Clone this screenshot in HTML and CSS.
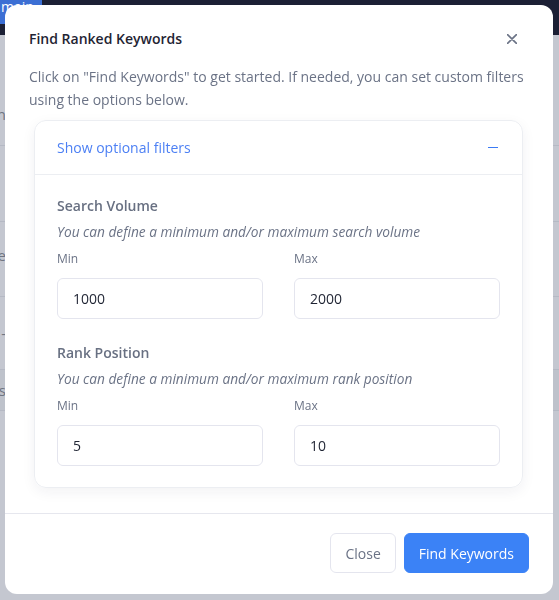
FILE: index.html
```html
<!DOCTYPE html>
<html lang="en">
<head>
<meta charset="utf-8">
<title>Find Ranked Keywords</title>
<link rel="stylesheet" href="styles.css">
</head>
<body>
<div class="page">
  <div class="topbar"><span class="tab">main</span></div>
  <div class="rows">
    <div class="row r1"><span class="cell">Domain</span></div>
    <div class="row r2"><span class="cell"></span></div>
    <div class="row r3"><span class="cell">Keyword ne</span></div>
    <div class="row r4"><span class="cell">-</span></div>
    <div class="row r5"><span class="cell">Results</span></div>
    <div class="row r6"><span class="cell"></span></div>
  </div>
</div>

<div class="modal">
  <div class="modal-header">
    <h2 class="modal-title">Find Ranked Keywords</h2>
    <button class="close-x" aria-label="Close">
      <svg width="10" height="10" viewBox="0 0 10 10"><path d="M0.5 0.5L9.5 9.5M9.5 0.5L0.5 9.5" stroke="currentColor" stroke-width="1.6" stroke-linecap="round"/></svg>
    </button>
  </div>
  <div class="modal-body">
    <p class="intro">Click on "Find Keywords" to get started. If needed, you can set custom filters using the options below.</p>
    <div class="card">
      <div class="card-head">
        <span class="toggle-text">Show optional filters</span>
        <span class="minus"></span>
      </div>
      <div class="card-body">
        <div class="group">
          <h3 class="group-title">Search Volume</h3>
          <p class="group-desc">You can define a minimum and/or maximum search volume</p>
          <div class="fields">
            <label class="field"><span class="field-label">Min</span><span class="input">1000</span></label>
            <label class="field"><span class="field-label">Max</span><span class="input">2000</span></label>
          </div>
        </div>
        <div class="group second">
          <h3 class="group-title">Rank Position</h3>
          <p class="group-desc">You can define a minimum and/or maximum rank position</p>
          <div class="fields">
            <label class="field"><span class="field-label">Min</span><span class="input">5</span></label>
            <label class="field"><span class="field-label">Max</span><span class="input">10</span></label>
          </div>
        </div>
      </div>
    </div>
  </div>
  <div class="modal-footer">
    <button class="btn btn-light">Close</button>
    <button class="btn btn-primary">Find Keywords</button>
  </div>
</div>
</body>
</html>
```
FILE: styles.css
```css
* { box-sizing: border-box; }
html, body { margin: 0; padding: 0; }
body {
  font-family: "Open Sans", "Noto Sans", sans-serif;
  background: #c4c7d0;
  width: 559px;
  height: 600px;
  overflow: hidden;
}
.page { width: 559px; height: 600px; }
.topbar {
  height: 35px;
  background: #1c2035;
  display: flex;
  align-items: flex-start;
}
.tab {
  width: 42px;
  height: 24px;
  background: #3c6fd4;
  color: #fff;
  font-size: 14px;
  line-height: 14px;
  white-space: nowrap;
  overflow: hidden;
  padding-left: 1px;
}
.rows { display: flex; flex-direction: column; }
.row {
  border-bottom: 1px solid #b5b9c4;
  display: flex;
  align-items: center;
}
.r1 { height: 111px; align-items: flex-end; padding-bottom: 22px; }
.r2 { height: 76px; }
.r3 { height: 75px; align-items: flex-start; padding-top: 24px; }
.r4 { height: 73px; }
.r5 { height: 41px; background: #bec2cb; }
.r6 { border-bottom: none; }
.cell {
  width: 6px;
  overflow: hidden;
  direction: rtl;
  white-space: nowrap;
  color: #6f7582;
  font-size: 15px;
  line-height: 18px;
}

/* modal */
.modal {
  position: fixed;
  top: 5px;
  left: 5px;
  width: 548px;
  height: 589px;
  background: #fff;
  border-radius: 12px;
  display: flex;
  flex-direction: column;
}
.modal-header {
  padding: 24px 24px 0 24px;
  display: flex;
  align-items: center;
  justify-content: space-between;
  height: 43px;
}
.modal-title {
  margin: 0;
  font-size: 14px;
  font-weight: 600;
  line-height: 19px;
  color: #1f2433;
}
.close-x {
  width: 34px;
  height: 34px;
  margin: -7px 0;
  border: none;
  background: none;
  padding: 0;
  color: #6b7386;
  display: flex;
  align-items: center;
  justify-content: center;
}
.modal-body {
  padding: 17px 24px 25px 24px;
  border-bottom: 1px solid #e6e7ee;
}
.intro {
  margin: 0 0 9px 0;
  font-size: 14px;
  line-height: 23px;
  color: #6b7386;
}
.card {
  margin: 0 6px 0 5px;
  border: 1px solid #eceef2;
  border-radius: 12px;
  box-shadow: 0 4px 14px rgba(30, 40, 60, 0.06);
}
.card-head {
  height: 54px;
  padding: 0 22px;
  display: flex;
  align-items: center;
  justify-content: space-between;
  border-bottom: 1px solid #eceef2;
}
.toggle-text {
  font-size: 14px;
  color: #4d80f4;
}
.minus {
  width: 10px;
  height: 1px;
  background: #3b7bf5;
  margin-right: 2px;
}
.card-body { padding: 21px 22px 21px 22px; }
.group-title {
  margin: 0;
  font-size: 14px;
  font-weight: 600;
  line-height: 20px;
  color: #687082;
}
.group-desc {
  margin: 6px 0 0 0;
  font-size: 13.7px;
  font-style: italic;
  line-height: 20px;
  color: #6b7386;
}
.fields {
  margin-top: 8px;
  display: grid;
  grid-template-columns: 1fr 1fr;
  column-gap: 31px;
}
.field { display: flex; flex-direction: column; }
.field-label {
  font-size: 12px;
  line-height: 18px;
  color: #6b7386;
  margin-bottom: 10px;
}
.input {
  height: 41px;
  border: 1px solid #e4e5ee;
  border-radius: 6px;
  padding: 0 15px;
  display: flex;
  align-items: center;
  font-size: 14px;
  color: #1f2433;
}
.second { margin-top: 24px; }
.modal-footer {
  padding: 19px 24px 21px 24px;
  display: flex;
  justify-content: flex-end;
  gap: 8px;
}
.btn {
  height: 40px;
  border-radius: 6px;
  font-family: inherit;
  font-size: 14px;
  padding: 0 14px;
}
.btn-light {
  background: #fff;
  border: 1px solid #e4e5ee;
  color: #6b7386;
}
.btn-primary {
  background: #3b82f6;
  border: 1px solid #3b82f6;
  color: #fff;
}
```
